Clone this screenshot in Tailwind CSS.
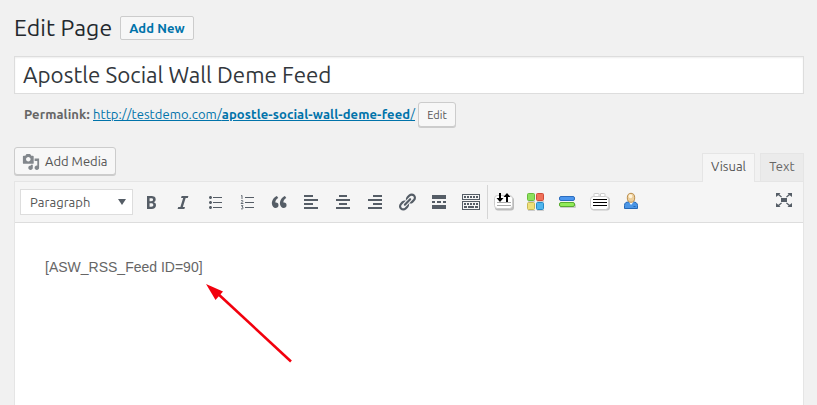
<!DOCTYPE html>
<html lang="en">
<head>
<meta charset="utf-8">
<title>Edit Page</title>
<script src="https://cdn.jsdelivr.net/npm/@tailwindcss/browser@4"></script>
</head>
<body class="bg-[#f1f1f1] w-[817px] h-[405px] overflow-hidden font-['Ubuntu','Noto_Sans',sans-serif] text-[#444]">
<main class="flex flex-col pl-[14px] pr-[13px] h-[405px]">
  <header class="flex items-start pt-4 h-14 shrink-0">
    <h1 class="w-[106px] text-[23px] leading-6 tracking-[0.1px] text-[#23282d] whitespace-nowrap">Edit Page</h1>
    <a class="w-[74px] h-6 border border-[#ccc] rounded-[2px] bg-[#f7f7f7] text-[#0073aa] text-[13px] font-bold leading-[23px] tracking-[0.1px] text-center whitespace-nowrap">Add New</a>
  </header>
  <div class="h-[38px] shrink-0 border border-[#ddd] bg-white shadow-[inset_0_1px_2px_rgba(0,0,0,0.07)] pl-2 text-[22.4px] leading-[36px] tracking-[-0.02px] text-[#32373c] whitespace-nowrap"><span>Apostle Social Wall Deme Feed</span></div>
  <div class="flex items-start mt-2 h-[45px] shrink-0 pl-[10px] text-[13px] leading-[25px] whitespace-nowrap">
    <b class="w-[69px] text-[#666] tracking-[0.1px]">Permalink:</b>
    <a class="w-[325px] text-[#0073aa] underline tracking-[0.07px]">http://testdemo.com/<b class="tracking-[0.11px]">apostle-social-wall-deme-feed</b>/</a>
    <button class="w-[38px] h-[25px] border border-[#ccc] rounded-[3px] bg-[#f7f7f7] shadow-[0_1px_0_#ccc] text-[11px] leading-[22px] text-[#555]">Edit</button>
  </div>
  <div class="flex justify-between h-[34px] shrink-0">
    <button class="flex items-center w-[102px] h-7 border border-[#ccc] rounded-[3px] bg-[#f7f7f7] shadow-[0_1px_0_#ccc] pl-[7px] gap-[5px] text-[13px] text-[#555] whitespace-nowrap">
      <svg class="relative top-px w-[18px] h-[18px] fill-[#82878c] shrink-0" viewBox="0 0 20 20"><path d="M13 11V4c0-.55-.45-1-1-1h-1.67L9 1H5L3.67 3H2c-.55 0-1 .45-1 1v7c0 .55.45 1 1 1h10c.55 0 1-.45 1-1zM7 4.5c1.38 0 2.5 1.12 2.5 2.5S8.38 9.5 7 9.5 4.5 8.38 4.5 7 5.62 4.5 7 4.5zM14 6h5v10.5c0 1.38-1.12 2.5-2.5 2.5S14 17.88 14 16.5s1.12-2.5 2.5-2.5c.17 0 .34.02.5.05V9h-3V6zm-4 8.05V13h2v3.5c0 1.38-1.12 2.5-2.5 2.5S7 17.88 7 16.5 8.12 14 9.5 14c.17 0 .34.02.5.05z"/></svg>
      <span class="pt-px">Add Media</span>
    </button>
    <div class="flex gap-[5px] pt-[6px] text-[13px] leading-[25px] text-center">
      <div class="relative z-10 w-[53px] h-[29px] border border-b-0 border-[#e5e5e5] bg-[#f5f5f5] text-[#555]">Visual</div>
      <div class="w-11 h-7 border border-b-0 border-[#e5e5e5] bg-[#ebebeb] text-[#666]">Text</div>
    </div>
  </div>
  <section class="flex flex-col flex-1 border border-b-0 border-[#e5e5e5] bg-white">
    <div class="flex items-center h-[41px] shrink-0 border-b border-[#ddd] bg-[#f5f5f5] pl-[5px] pr-[9px]">
      <div class="flex items-center justify-between w-[113px] h-[26px] mr-[2px] pl-[9px] pr-[6px] border border-[#ddd] bg-white text-[13px] text-[#555]"><span class="pt-[2px] tracking-[0.05px]">Paragraph</span><svg class="w-2 h-[6px] fill-[#555d66]" viewBox="0 0 8 6"><path d="M0 0h8L4 6z"/></svg></div>
      <div class="flex items-center [&>i]:flex [&>i]:w-8 [&>i]:justify-center [&_svg]:w-5 [&_svg]:h-5 fill-[#555d66]">
        <i><svg viewBox="0 0 20 20"><path d="M6 4v13h4.54c1.37 0 2.46-.33 3.26-1 .8-.66 1.2-1.58 1.2-2.77 0-.84-.17-1.51-.51-2.01s-.9-.85-1.67-1.03v-.09c.57-.1 1.02-.4 1.36-.9s.51-1.13.51-1.91c0-1.14-.39-1.98-1.17-2.5C12.75 4.26 11.5 4 9.78 4H6zm2.57 5.15V6.26h1.36c.73 0 1.27.11 1.61.32.34.22.51.58.51 1.07 0 .54-.16.92-.47 1.15s-.82.35-1.51.35h-1.5zm0 2.19h1.6c1.44 0 2.16.53 2.16 1.61 0 .6-.17 1.05-.51 1.34s-.86.43-1.57.43H8.57v-3.38z"/></svg></i>
        <i><svg viewBox="0 0 20 20"><path d="M14.78 6h-2.13l-2.8 9h2.12l-.62 2H4.6l.62-2h2.14l2.8-9H8.03l.62-2h6.75z"/></svg></i>
        <i><svg viewBox="0 0 20 20"><path d="M5.5 7C4.67 7 4 6.33 4 5.5 4 4.68 4.67 4 5.5 4 6.32 4 7 4.68 7 5.5 7 6.33 6.32 7 5.5 7zM8 5h9v1H8V5zm-2.5 7c-.83 0-1.5-.67-1.5-1.5C4 9.68 4.67 9 5.5 9c.82 0 1.5.68 1.5 1.5 0 .83-.68 1.5-1.5 1.5zM8 10h9v1H8v-1zm-2.5 7c-.83 0-1.5-.67-1.5-1.5 0-.82.67-1.5 1.5-1.5.82 0 1.5.68 1.5 1.5 0 .83-.68 1.5-1.5 1.5zM8 15h9v1H8v-1z"/></svg></i>
        <i><svg viewBox="0 0 20 20"><path d="M8 5h9v1H8zM8 10h9v1H8zM8 15h9v1H8z"/><path class="fill-none stroke-[#555d66] stroke-[.9]" d="M4 4l1-.6V7M4 8.8c2-1 2.500 .4 1.200 1.400L4 11.500h2.400M4 13.700h2L5 15c2 .2 1.500 2.500-1 1.800"/></svg></i>
        <i><svg viewBox="0 0 20 20"><path d="M9.490 13.220c0-.74-.2-1.380-.61-1.900-.62-.78-1.830-.88-2.530-.72-.29-1.650 1.110-3.750 2.920-4.650L7.880 4c-2.730 1.300-5.420 4.280-4.960 8.050C3.210 14.430 4.590 16 6.540 16c.85 0 1.560-.25 2.120-.75s.83-1.180.83-2.030zm8.050 0c0-.74-.2-1.380-.61-1.900-.63-.78-1.830-.88-2.530-.72-.29-1.650 1.110-3.750 2.920-4.650L15.930 4c-2.730 1.300-5.410 4.280-4.950 8.050.29 2.380 1.660 3.950 3.610 3.950.85 0 1.560-.25 2.120-.75s.83-1.180.83-2.030z"/></svg></i>
        <i><svg viewBox="0 0 20 20"><path d="M3 3h9v2H3zM3 7h14v2H3zM3 11h9v2H3zM3 15h14v2H3z"/></svg></i>
        <i><svg viewBox="0 0 20 20"><path d="M6 3h8v2H6zM3 7h14v2H3zM6 11h8v2H6zM3 15h14v2H3z"/></svg></i>
        <i><svg viewBox="0 0 20 20"><path d="M8 3h9v2H8zM3 7h14v2H3zM8 11h9v2H8zM3 15h14v2H3z"/></svg></i>
        <i><svg viewBox="0 0 20 20"><path d="M17.740 2.760c1.680 1.690 1.680 4.410 0 6.100l-1.530 1.520c-1.120 1.120-2.700 1.470-4.140 1.090l2.620-2.610.76-.77.76-.76c.84-.84.84-2.200 0-3.040-.84-.85-2.200-.85-3.040 0l-.77.76-3.380 3.380c-.37-1.440-.02-3.020 1.100-4.140l1.520-1.530c1.690-1.680 4.420-1.680 6.100 0zM8.590 13.430l5.340-5.340c.42-.42.42-1.100 0-1.520-.44-.43-1.130-.39-1.530 0l-5.330 5.340c-.42.42-.42 1.100 0 1.520.44.43 1.130.39 1.520 0zm-.76 2.290l4.140-4.150c.38 1.440.03 3.020-1.090 4.140l-1.520 1.530c-1.690 1.680-4.410 1.680-6.100 0-1.680-1.680-1.680-4.420 0-6.100l1.530-1.520c1.120-1.120 2.700-1.470 4.140-1.100l-4.140 4.150c-.85.84-.85 2.200 0 3.050.84.84 2.200.84 3.040 0z"/></svg></i>
        <i><svg viewBox="0 0 20 20"><path d="M17 7V3H3v4h14zM6 11V9H3v2h3zm6 0V9H8v2h4zm5 0V9h-3v2h3zm0 6v-4H3v4h14z"/></svg></i>
        <i><svg viewBox="0 0 20 20" shape-rendering="crispEdges"><path fill-rule="evenodd" d="M1 2h18v6H1zM2 3v4h16V3zM1 9h18v9H1zM2 10v7h16v-7z"/><path d="M3 4h2v2H3zM6 4h2v2H6zM9 4h2v2H9zM12 4h2v2h-2zM15 4h2v2h-2zM3 11h2v2H3zM6 11h2v2H6zM9 11h2v2H9zM12 11h2v2h-2zM15 11h2v2h-2zM3 14h3v2H3zM7 14h6v2H7zM14 14h3v2h-3z"/></svg></i>
      </div>
      <div class="w-px h-[34px] bg-[#d5d5d5]"></div>
      <div class="flex items-center [&>i]:flex [&>i]:w-8 [&>i]:justify-center [&_svg]:w-5 [&_svg]:h-5">
        <i><svg viewBox="0 0 20 20"><rect x="1" y="5" width="19" height="13.500" rx="3" fill="#bbb"/><rect x=".5" y="3.500" width="18" height="13" rx="3" fill="#fff" stroke="#ccc"/><path d="M3 10h14v1H3zM3 13h14v1H3z" fill="#aaa"/><path d="M5 1h2v5h2.500L6 10 2.500 6H5zM12 10h2V5h2.500L13 1 9.500 5H12z"/></svg></i>
        <i><svg viewBox="0 0 20 20"><g stroke-width="1"><path d="M2 9h7v1H2zM11 9h7v1h-7zM2 18h7v1H2zM11 18h7v1h-7z" fill="#ccc"/><rect x="1.500" y="1.500" width="7" height="7" rx="1" fill="#8de05c" stroke="#67bb3d"/><rect x="10.500" y="1.500" width="7" height="7" rx="1" fill="#ef7058" stroke="#cf4b39"/><rect x="1.500" y="10.500" width="7" height="7" rx="1" fill="#eee07b" stroke="#c8b955"/><rect x="10.500" y="10.500" width="7" height="7" rx="1" fill="#4eb5ee" stroke="#268ac5"/></g></svg></i>
        <i><svg viewBox="0 0 20 20"><rect x="2" y="12" width="16" height="4" rx="1" fill="#ccc"/><rect x="1.500" y="4.500" width="15" height="4" rx="1.500" fill="#4b96ee" stroke="#2c6dbe"/><rect x="1.500" y="10.500" width="15" height="4" rx="1.500" fill="#91eb5a" stroke="#58aa30"/></svg></i>
        <i><svg viewBox="0 0 20 20"><rect x="1" y="5" width="19" height="13.500" rx="3" fill="#c5c5c5"/><path d="M4 5V2q0-.5.500-.500h4Q9 1.500 9 2v3M10.500 5V2q0-.5.500-.500h3.500q.5 0 .5.500v3" fill="#fff" stroke="#ccc"/><rect x=".5" y="4.500" width="18" height="13" rx="3" fill="#fff" stroke="#ccc"/><path d="M3 7h14v1H3zM3 10h14v1H3zM3 13h14v1H3z"/></svg></i>
        <i><svg viewBox="0 0 20 20"><path d="M2.500 16.500v-3c0-3 2-3.500 4-3.500h5c2 0 4 1 4 3.500v3z" fill="#4b96e6" stroke="#2668b5"/><path d="M7 10l2 3 2.500-3z" fill="#fff"/><path d="M11.500 14.500h2" stroke="#2668b5"/><ellipse cx="9" cy="5.800" rx="3.700" ry="4.500" fill="#edcf9c" stroke="#b98d4d"/><ellipse cx="8.500" cy="4.300" rx="1.800" ry="2" fill="#fff3da"/></svg></i>
      </div>
      <svg class="w-5 h-5 ml-auto mb-[4px] fill-[#555d66]" viewBox="0 0 20 20"><path d="M7 8h6v4H7zM2 3h4.500L5.300 4.200 8 6.700 7.200 7.500 4.300 5.200 2 7zM18 3h-4.500l1.200 1.200L12 6.700l.8.800 2.900-2.300L18 7zM2 17h4.500l-1.200-1.200L8 13.300l-.8-.8-2.900 2.300L2 13zM18 17h-4.500l1.200-1.200L12 13.300l.8-.8 2.900 2.300L18 13z"/></svg>
    </div>
    <div class="relative flex-1 pt-[34px] pl-[30px] font-['Liberation_Sans',Arial,sans-serif] text-[14px] leading-5 text-[#666]">
      <p>[ASW_RSS_Feed ID=90]</p>
      <svg class="absolute left-[191px] top-[60px] w-[90px] h-[82px]" viewBox="0 0 90 82"><path d="M10 9L85 78.500" stroke="#f2000d" stroke-width="2.600"/><path d="M0 1l17 7.500L9.500 17z" fill="#f2000d"/></svg>
    </div>
  </section>
</main>
</body>
</html>
